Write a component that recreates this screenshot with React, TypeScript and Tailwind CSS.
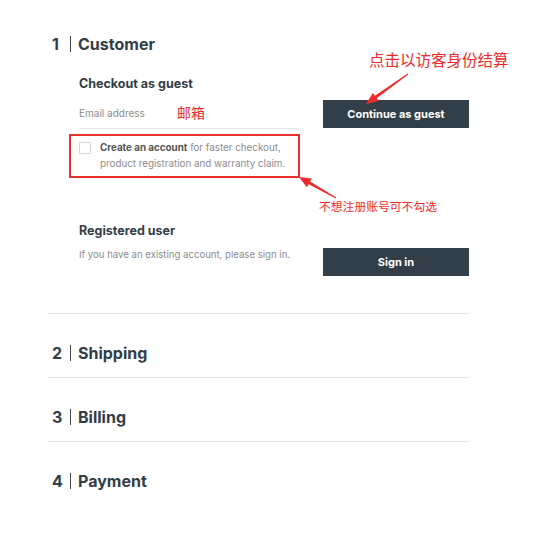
import React from 'react';

const font = { fontFamily: 'Inter, "Noto Sans", sans-serif' };
const cjk = 'font-["Noto_Sans_CJK_SC",sans-serif]';

function StepHeading({ n, title }: { n: number; title: string }) {
  return (
    <h2 className="flex items-center h-6 pl-[4px] text-[16px] font-bold text-[#333d47] leading-6">
      <span className="w-[11px]">{n}</span>
      <span className="w-px h-[16px] bg-[#444] mx-[7px]" />
      <span>{title}</span>
    </h2>
  );
}

function Divider() {
  return <div className="h-px bg-[#e6e6e6]" />;
}

function Arrows() {
  return (
    <svg className="absolute inset-0 pointer-events-none" width="554" height="553" viewBox="0 0 554 553">
      <polygon
        fill="#ee2a2a"
        points="408.3,74.4 376.7,98.2 378.7,101.1 366,104 372.9,92.9 374.9,95.8 407.7,73.6"
      />
      <polygon
        fill="#ee2a2a"
        points="336.25,197.57 310.1,181.6 311.9,178.6 299,177 306.9,187.3 308.7,184.2 335.75,198.43"
      />
    </svg>
  );
}

export default function App() {
  return (
    <div className="relative w-[554px] h-[553px] bg-white font-['Inter',sans-serif]" style={font}>
      <div className="ml-[48px] w-[421px] pt-[32px]">
        <StepHeading n={1} title="Customer" />

        <div className="pl-[31px]">
          {/* guest checkout */}
          <div className="mt-[20px] text-[12.5px] leading-4 font-bold text-[#333d47]">Checkout as guest</div>
          <div className="flex mt-[8px]">
            <div className="w-[221px] h-[29px] border-b border-[#e8e8e8] flex items-center">
              <span className="text-[10px] text-[#8c8c8c] leading-4 -mt-[3px]">Email address</span>
            </div>
            <button
              type="button"
              className="ml-auto w-[146px] h-[28px] bg-[#323e48] text-white text-[11px] font-bold"
            >
              Continue as guest
            </button>
          </div>

          <div className="-ml-[10px] mt-[5px] w-[231px] border-2 border-[#e8302f] flex pt-[4px] pb-[4px] pl-[8px]">
            <div className="w-[12px] h-[12px] border border-[#d6d6d6] rounded-[1px] mt-[2px] shrink-0" />
            <p className="ml-[9px] text-[9.8px] leading-4 text-[#8c8c8c] whitespace-nowrap">
              <span className="font-bold text-[#555]">Create an account</span> for faster checkout,
              <br />
              product registration and warranty claim.
            </p>
          </div>

          {/* registered */}
          <div className="mt-[45px] text-[12.5px] leading-4 font-bold text-[#333d47]">Registered user</div>
          <div className="flex items-start mt-[9px]">
            <span className="text-[9.6px] text-[#8c8c8c] leading-[14px]">
              If you have an existing account, please sign in.
            </span>
            <button
              type="button"
              className="ml-auto w-[146px] h-[28px] bg-[#323e48] text-white text-[11px] font-bold"
            >
              Sign in
            </button>
          </div>
        </div>

        <div className="mt-[37px]">
          <Divider />
        </div>
        <div className="mt-[27px]">
          <StepHeading n={2} title="Shipping" />
        </div>
        <div className="mt-[12px]">
          <Divider />
        </div>
        <div className="mt-[27px]">
          <StepHeading n={3} title="Billing" />
        </div>
        <div className="mt-[12px]">
          <Divider />
        </div>
        <div className="mt-[27px]">
          <StepHeading n={4} title="Payment" />
        </div>
      </div>

      {/* annotations */}
      <span className={`absolute left-[177px] top-[102px] text-[14px] leading-5 text-[#ee2a2a] ${cjk}`}>邮箱</span>
      <span className={`absolute left-[369px] top-[49px] text-[15.5px] leading-5 text-[#ee2a2a] ${cjk}`}>
        点击以访客身份结算
      </span>
      <span className={`absolute left-[319px] top-[198px] text-[11.8px] leading-4 text-[#ee2a2a] ${cjk}`}>
        不想注册账号可不勾选
      </span>
      <Arrows />
    </div>
  );
}
